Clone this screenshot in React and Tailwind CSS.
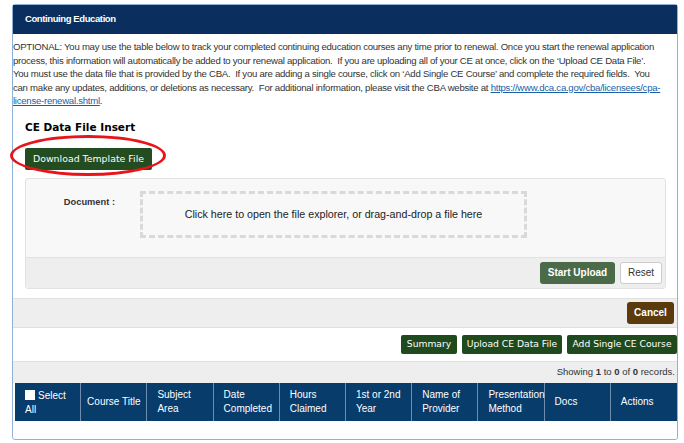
export default function App() {
  const cols = ["Course Title", "Subject Area", "Date Completed", "Hours Claimed", "1st or 2nd Year", "Name of Provider", "Presentation Method", "Docs", "Actions"];
  const sans = { fontFamily: '"Liberation Sans", Arial, sans-serif' };
  const dv = { fontFamily: '"DejaVu Sans", Verdana, sans-serif' };
  return (
    <div className="w-[684px] h-[443px] bg-white pt-[4px] pl-[12px] overflow-hidden" style={sans}>
      <div className="w-[666px] h-[436px] border border-[#8fb1d6] rounded-[3px] flex flex-col">
        <div className="h-[29px] bg-[#0a2f5f] text-white text-[9.5px] tracking-[-0.4px] pl-[12px] flex items-center font-bold">
          Continuing Education
        </div>
        <div className="pt-[6px] text-[9.6px] tracking-[-0.26px] leading-[13.6px] text-[#333] whitespace-pre">
          OPTIONAL: You may use the table below to track your completed continuing education courses any time prior to renewal. Once you start the renewal application<br />
          process, this information will automatically be added to your renewal application.  If you are uploading all of your CE at once, click on the ‘Upload CE Data File’.<br />
          You must use the data file that is provided by the CBA.  If you are adding a single course, click on ‘Add Single CE Course’ and complete the required fields.  You<br />
          can make any updates, additions, or deletions as necessary.  For additional information, please visit the CBA website at <span className="text-[#1a5fa8] underline">https://www.dca.ca.gov/cba/licensees/cpa-</span><br />
          <span className="text-[#1a5fa8] underline">license-renewal.shtml</span>.
        </div>
        <div className="pl-[12px] mt-[12px] text-[10.5px] font-bold text-black" style={dv}>
          CE Data File Insert
        </div>
        <div className="pl-[12px] mt-[9px]">
          <div className="relative inline-block">
            <button className="h-[22px] w-[127px] bg-[#244c21] text-white text-[9.4px] rounded-[2px]" style={dv}>
              Download Template File
            </button>
            <div className="absolute left-[-15px] top-[-10px] w-[156px] h-[41px] border-[3px] border-[#e8141a] rounded-[50%] pointer-events-none" />
          </div>
        </div>
        <div className="ml-[12px] mr-[11px] mt-[8px] h-[111px] bg-[#f8f8f8] border border-[#e2e2e2] rounded-[3px] flex flex-col">
          <div className="flex-1 flex pt-[12px]">
            <div className="w-[114px] text-right pr-[25px] pt-[5px] text-[9.3px] font-bold text-[#333]">Document :</div>
            <div className="w-[387px] h-[47px] border-[3px] border-dashed border-[#d9d9d9] flex items-center justify-center text-[10.7px] text-[#222]">
              Click here to open the file explorer, or drag-and-drop a file here
            </div>
          </div>
          <div className="h-[31px] bg-[#eeeeee] border-t border-[#e2e2e2] flex items-center justify-end gap-[5px] pr-[3px]">
            <button className="h-[22px] w-[75px] bg-[#4b6b48] text-white text-[10px] font-bold rounded-[3px]">Start Upload</button>
            <button className="h-[22px] w-[42px] bg-white border border-[#ccc] text-[#333] text-[10px] rounded-[3px]">Reset</button>
          </div>
        </div>
        <div className="mt-[9px] h-[30px] bg-[#eeeeee] border-t border-b border-[#e0e0e0] flex items-center justify-end pr-[3px]">
          <button className="h-[22px] w-[47px] bg-[#5b3a0c] text-white text-[10px] font-bold rounded-[3px]">Cancel</button>
        </div>
        <div className="h-[33px] flex items-center justify-end gap-[5px]">
          <button className="h-[19px] w-[56px] bg-[#1f4a1e] text-white text-[9.2px] rounded-[2px]" style={dv}>Summary</button>
          <button className="h-[19px] w-[100px] bg-[#1f4a1e] text-white text-[9.2px] rounded-[2px]" style={dv}>Upload CE Data File</button>
          <button className="h-[19px] w-[110px] bg-[#1f4a1e] text-white text-[9.2px] rounded-[2px]" style={dv}>Add Single CE Course</button>
        </div>
        <div className="h-[22px] bg-[#eeeeee] border-t border-[#e0e0e0] flex items-center justify-end pr-[2px] text-[9.5px] text-[#333]">
          Showing&nbsp;<b>1</b>&nbsp;to&nbsp;<b>0</b>&nbsp;of&nbsp;<b>0</b>&nbsp;records.
        </div>
        <div className="ml-[2px] grid grid-cols-10 h-[38px] bg-[#073c6b] text-white text-[10px] leading-[14px]">
          <div className="border-r border-[#6d8cae] pl-[10px] pt-[6px]">
            <span className="inline-block w-[10px] h-[10px] bg-white align-[-1px] mr-[3px]" />Select<br />All
          </div>
          {cols.map((c, i) => (
            <div key={c} className={`flex items-center ${c === "Course Title" ? "justify-center" : "pl-[10px]"} ${i < cols.length - 1 ? "border-r border-[#6d8cae]" : ""}`}>
              <span>{c.split(" ").length > 1 && c !== "Course Title" ? <>{c.slice(0, c.lastIndexOf(" "))}<br />{c.slice(c.lastIndexOf(" ") + 1)}</> : c}</span>
            </div>
          ))}
        </div>
        <div className="flex-1 bg-white rounded-b-[3px]" />
      </div>
    </div>
  );
}
